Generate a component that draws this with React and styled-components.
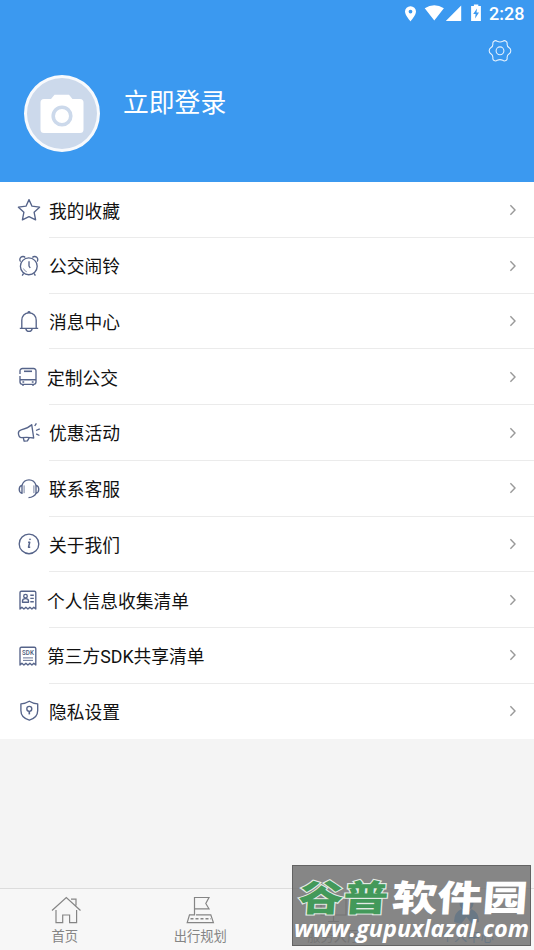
import React from 'react';
import styled, { createGlobalStyle } from 'styled-components';

const GlobalStyle = createGlobalStyle`
  body {
    margin: 0;
    background: #f4f4f4;
    font-family: Roboto, 'Noto Sans CJK SC', sans-serif;
  }
  * {
    box-sizing: border-box;
  }
`;

const StarIcon = () => (
  <path d="M12 1.6 15 8.2 22.6 9.2 17.1 14.2 18.6 21.9 12 18.6 5.4 21.9 6.9 14.2 1.4 9.2 9 8.2Z" />
);

const ClockIcon = () => (
  <>
    <circle cx="11.8" cy="12.3" r="8.4" />
    <path d="M3.6 7.6A3 3 0 1 1 8.2 3.5M15.4 3.5A3 3 0 1 1 20 7.6M12 7.3V12L13.2 14M6.6 19.4 5.2 21.7M17 19.4 18.4 21.7" />
    <path d="M6.4 14.5Q7.4 17 9.8 17.8" strokeWidth="0.7" />
  </>
);

const BellIcon = () => (
  <path d="M2.8 18.4H21.2M4.8 18.2V10.2C4.8 6 7.6 2.8 12 2.8S19.2 6 19.2 10.2V18.2M10.8 2.6Q12 .6 13.2 2.6M8.8 18.6Q9.3 21.4 12 21.4T15.2 18.6" />
);

const BusIcon = () => (
  <>
    <path d="M3 9V6A2.4 2.4 0 0 1 5.4 3.5H16.6A2.4 2.4 0 0 1 19 6V17A2.4 2.4 0 0 1 16.6 19.3H5.4A2.4 2.4 0 0 1 3 17V11M3 14.7H19M6 19.5V21M16 19.5V21" />
    <path d="M7 6.3H15" strokeWidth="1.6" />
    <path d="M5.4 17H7.2M14.8 17H16.6" />
  </>
);

const MegaphoneIcon = () => (
  <>
    <path d="M14.7 3.7Q10.8 7.3 4.2 8.8 1.3 9.7 1.4 12.3 1.6 16.6 4.6 16.7 10.8 15.9 16.7 17Z" />
    <path d="M6.3 17 7.2 20.2 10.4 19.8 12.2 16.8M17.7 5 19.4 2.3M19 9.5 22.8 7.9M19.2 12.9 22.4 14.5" />
  </>
);

const HeadsetIcon = () => (
  <>
    <path d="M5 8.4C6 4.9 8.3 2.8 12 2.8S18 4.9 19 8.4M19.2 16.3C17.8 19 15.3 20.4 11.5 20.7" />
    <path d="M5 8.3C1.3 9.2 1.3 15.4 5 16.4ZM19 8.3C22.7 9.2 22.7 15.4 19 16.4Z" />
    <path d="M7.1 8.4V16.2M16.9 8.4V16.2" strokeWidth="0.8" />
  </>
);

const InfoIcon = () => (
  <>
    <circle cx="12" cy="11.9" r="9.8" />
    <path d="M11.1 10.2H12.7L11.5 15.2H13.2" strokeWidth="1.5" />
    <circle cx="13" cy="7.3" r=".5" strokeWidth="1" />
  </>
);

const sheet = 'M3 21V4.6Q3 3.2 4.4 3.2H17.4Q18.8 3.2 18.8 4.6V21L16.8 19.3 14.9 21 12.9 19.3 10.9 21 8.9 19.3 6.9 21 4.9 19.3Z';

const CardIcon = () => (
  <>
    <path d={sheet} />
    <circle cx="8.5" cy="8.2" r="1.8" />
    <path d="M5.5 14.2V13Q5.5 10.6 8.5 10.6T11.5 13V14.2ZM13.3 7.2H16.8M13.3 10.4H16.8M13.3 13.7H16.8" />
  </>
);

const SdkIcon = () => (
  <>
    <path d={sheet} />
    <text x="5.1" y="11.2" textLength="11.7" lengthAdjust="spacingAndGlyphs" fontSize="7.4" fontWeight="500" fill="#4a5878" stroke="none">
      SDK
    </text>
    <path d="M6 13.9H16M6 16.4H16" strokeWidth="0.9" />
  </>
);

const ShieldIcon = () => (
  <>
    <path d="M12.3 2.2Q8.2 4.8 3.9 4.8V11.5C3.9 16.6 7.5 19.8 12.3 21.2 17.1 19.8 20.7 16.6 20.7 11.5V4.8Q16.4 4.8 12.3 2.2Z" />
    <circle cx="12.3" cy="9.8" r="2.5" />
    <path d="M12.3 12.2V15.4" strokeWidth="1.6" />
  </>
);

const menu = [
  { label: '我的收藏', Icon: StarIcon },
  { label: '公交闹铃', Icon: ClockIcon },
  { label: '消息中心', Icon: BellIcon },
  { label: '定制公交', Icon: BusIcon, narrow: true },
  { label: '优惠活动', Icon: MegaphoneIcon },
  { label: '联系客服', Icon: HeadsetIcon },
  { label: '关于我们', Icon: InfoIcon },
  { label: '个人信息收集清单', Icon: CardIcon, narrow: true },
  { label: '第三方SDK共享清单', Icon: SdkIcon, narrow: true },
  { label: '隐私设置', Icon: ShieldIcon },
];

const HomeIcon = () => (
  <path d="M3 14.5 17.3 1.5 31.5 14.5M22 3.2H27V9.5M7 14V26.6H13.7V19H20.6V26.6H27.6V14" />
);

const RouteIcon = () => (
  <>
    <path d="M10.5 19.5V1.5H25L21.8 7.5 25 12.8H10.5M10 18.8H5.5L3.2 26.6H29.4L26.8 18.8H12" />
    <path d="M6.5 22.7H27" strokeDasharray="3 2" strokeWidth="1.4" />
  </>
);

const ServiceIcon = () => <path d="M3 2H28V19H3ZM15.5 19V25.5M10 25.5H21" />;

const UserIcon = () => (
  <g fill="currentColor" stroke="none">
    <circle cx="15.5" cy="7.5" r="7" />
    <path d="M10.5 13 15.5 19 20.5 13Q28 16 28 26L21 28 15.5 21 10 28 3 26Q3 16 10.5 13Z" />
  </g>
);

const tabs = [
  { label: '首页', Icon: HomeIcon, nudge: -2 },
  { label: '出行规划', Icon: RouteIcon },
  { label: '服务大厅', Icon: ServiceIcon },
  { label: '个人中心', Icon: UserIcon, active: true },
];

const App = () => {
  return (
    <Page>
      <GlobalStyle />
      <Header>
        <StatusBar>
          <StatusIcons viewBox="0 0 84 18">
            <path d="M6.5 1.2A5.4 5.4 0 0 0 1 6.6C1 10.4 6.5 16.4 6.5 16.4S12 10.4 12 6.6A5.4 5.4 0 0 0 6.5 1.2ZM6.5 4.7a1.9 1.9 0 1 1 0 3.8 1.9 1.9 0 0 1 0-3.8Z" />
            <path d="M20.7 3.3Q30.3-3 39.9 3.3L30.3 15.5ZM57.2.6V16H41.8Z" />
            <path d="M69.9-.5H74.3V1.1H76.9V16H67.1V1.1H69.9ZM73 3.6 69.2 9H71.6L71.1 13.4 75 7.6H72.5Z" />
          </StatusIcons>
          <Time>2:28</Time>
        </StatusBar>
        <Settings>
          <svg width="24" height="24" viewBox="0 0 24 24">
            <path d="M9.2 2.3Q12 3.6 14.8 2.3Q16.4 1 18 2.2Q19.5 3 19.1 5Q19 7.4 21.2 8.8Q22.8 9.8 22.8 11.8T21.2 14.8Q19 16.2 19.1 18.6Q19.5 20.6 18 21.4Q16.4 22.6 14.8 21.3Q12 20 9.2 21.3Q7.6 22.6 6 21.4Q4.5 20.6 4.9 18.6Q5 16.2 2.8 14.8Q1.2 13.8 1.2 11.8T2.8 8.8Q5 7.4 4.9 5Q4.5 3 6 2.2Q7.6 1 9.2 2.3Z" />
            <circle cx="12" cy="11.8" r="3.9" />
          </svg>
        </Settings>
        <Profile>
          <Avatar>
            <svg width="44" height="40" viewBox="0 0 44 40">
              <path d="M4 5H11L14.5.8H29L32.5 5H40Q43.5 5 43.5 8.5V35.5Q43.5 39 40 39H4Q.5 39 .5 35.5V8.5Q.5 5 4 5Z" fill="#fff" />
              <circle cx="22" cy="22" r="8.8" fill="#fff" stroke="#ccd9eb" strokeWidth="3.6" />
            </svg>
          </Avatar>
          <Login>立即登录</Login>
        </Profile>
      </Header>
      <Menu>
        {menu.map(({ label, Icon, narrow }) => (
          <Row key={label}>
            <RowIcon viewBox="0 0 24 24">
              <Icon />
            </RowIcon>
            <RowBody>
              <Label $narrow={narrow}>{label}</Label>
              <Chevron viewBox="0 0 8 12">
                <path d="M1.4 1.2 6 6 1.4 10.8" />
              </Chevron>
            </RowBody>
          </Row>
        ))}
      </Menu>
      <TabBar>
        {tabs.map(({ label, Icon, active, nudge }) => (
          <Tab key={label} $active={active} $nudge={nudge}>
            <svg width="32" height="29" viewBox="0 0 32 29">
              <Icon />
            </svg>
            <span>{label}</span>
          </Tab>
        ))}
      </TabBar>
      <Stamp viewBox="0 0 239 81">
        <g className="name">
          <text x="6" y="51" textLength="92" lengthAdjust="spacingAndGlyphs" className="green">谷普</text>
          <text x="102" y="51" textLength="139" lengthAdjust="spacingAndGlyphs">软件园</text>
        </g>
        <text x="-1" y="73" textLength="241" lengthAdjust="spacingAndGlyphs" className="url">
          www.gupuxlazal.com
        </text>
      </Stamp>
    </Page>
  );
};

const Page = styled.div`
  position: relative;
  display: flex;
  flex-direction: column;
  width: 534px;
  height: 950px;
  overflow: hidden;
  background: #f4f4f4;
`;

const Header = styled.header`
  display: flex;
  flex-direction: column;
  height: 182.4px;
  flex-shrink: 0;
  background: #3b99f0;
  color: #fff;
`;

const StatusBar = styled.div`
  display: flex;
  align-items: center;
  justify-content: flex-end;
  height: 27px;
  padding-right: 9px;
`;

const StatusIcons = styled.svg`
  width: 84px;
  height: 18px;
  margin: 1px 1px 0 0;
  overflow: visible;
  fill: #fff;
  fill-rule: evenodd;
`;

const Time = styled.span`
  width: 36px;
  font-size: 18px;
  font-weight: 500;
  white-space: nowrap;
`;

const Settings = styled.div`
  display: flex;
  justify-content: flex-end;
  padding: 12px 22px 0 0;

  svg {
    fill: none;
    stroke: #e4f1fd;
    stroke-width: 1.1;
  }
`;

const Profile = styled.div`
  display: flex;
  gap: 23px;
  padding: 12px 0 0 24px;
`;

const Avatar = styled.div`
  display: flex;
  align-items: center;
  justify-content: center;
  width: 76px;
  height: 77px;
  border: 3.5px solid #f8fafd;
  border-radius: 50%;
  background: #ccd9eb;
`;

const Login = styled.span`
  margin-top: 9px;
  font-size: 25.8px;
  line-height: 38px;
`;

const Menu = styled.ul`
  margin: 0;
  padding: 0;
  list-style: none;
  background: #fff;
`;

const RowBody = styled.div`
  display: flex;
  flex: 1;
  align-items: center;
  justify-content: space-between;
  height: 100%;
  padding-right: 17px;
  border-bottom: 1px solid #ebebeb;
`;

const Row = styled.li`
  display: flex;
  align-items: center;
  height: 55.7px;
  padding-left: 17px;

  &:last-child ${RowBody} {
    border-bottom-color: transparent;
  }
`;

const RowIcon = styled.svg`
  width: 24px;
  height: 24px;
  margin-right: 8px;
  fill: none;
  stroke: #56648a;
  stroke-width: 1.35;
  stroke-linejoin: round;
`;

const Label = styled.span`
  margin: 0 0 0 ${({ $narrow }) => ($narrow ? '-2px' : '0')};
  font-size: 17.75px;
  color: #111;
`;

const Chevron = styled.svg`
  width: 8px;
  height: 12px;
  margin-top: 0.5px;
  fill: none;
  stroke: #999;
  stroke-width: 1.4;
`;

const TabBar = styled.nav`
  display: flex;
  height: 62px;
  margin-top: auto;
  border-top: 1px solid #dcdcdc;
  background: #f7f7f7;
`;

const Tab = styled.div`
  display: flex;
  flex: 1;
  flex-direction: column;
  align-items: center;
  padding-top: 7px;
  margin-left: ${({ $nudge }) => $nudge || 0}px;
  padding-right: ${({ $nudge }) => -($nudge || 0)}px;
  font-size: 13.3px;
  line-height: 20px;
  color: ${({ $active }) => ($active ? '#3b99f0' : '#858585')};

  svg {
    margin-bottom: 2px;
    fill: none;
    stroke: currentColor;
    stroke-width: 1.2;
  }
`;

/* translucent site stamp over the tab bar */
const Stamp = styled.svg`
  position: absolute;
  left: 292px;
  top: 865px;
  width: 239px;
  height: 81px;
  border: 1px solid rgba(90, 90, 90, 0.8);
  background: rgba(114, 114, 114, 0.85);

  .name {
    font: 900 41px 'Noto Sans CJK SC', sans-serif;
    transform: skewX(-4deg) scaleY(0.9);
    fill: #fff;
  }
  .green {
    fill: #43995a;
    stroke: #e4ebe5;
    stroke-width: 2.4px;
    paint-order: stroke;
  }
  .url {
    font: italic 700 24px 'Open Sans', sans-serif;
    fill: #fff;
  }
`;

export default App;
